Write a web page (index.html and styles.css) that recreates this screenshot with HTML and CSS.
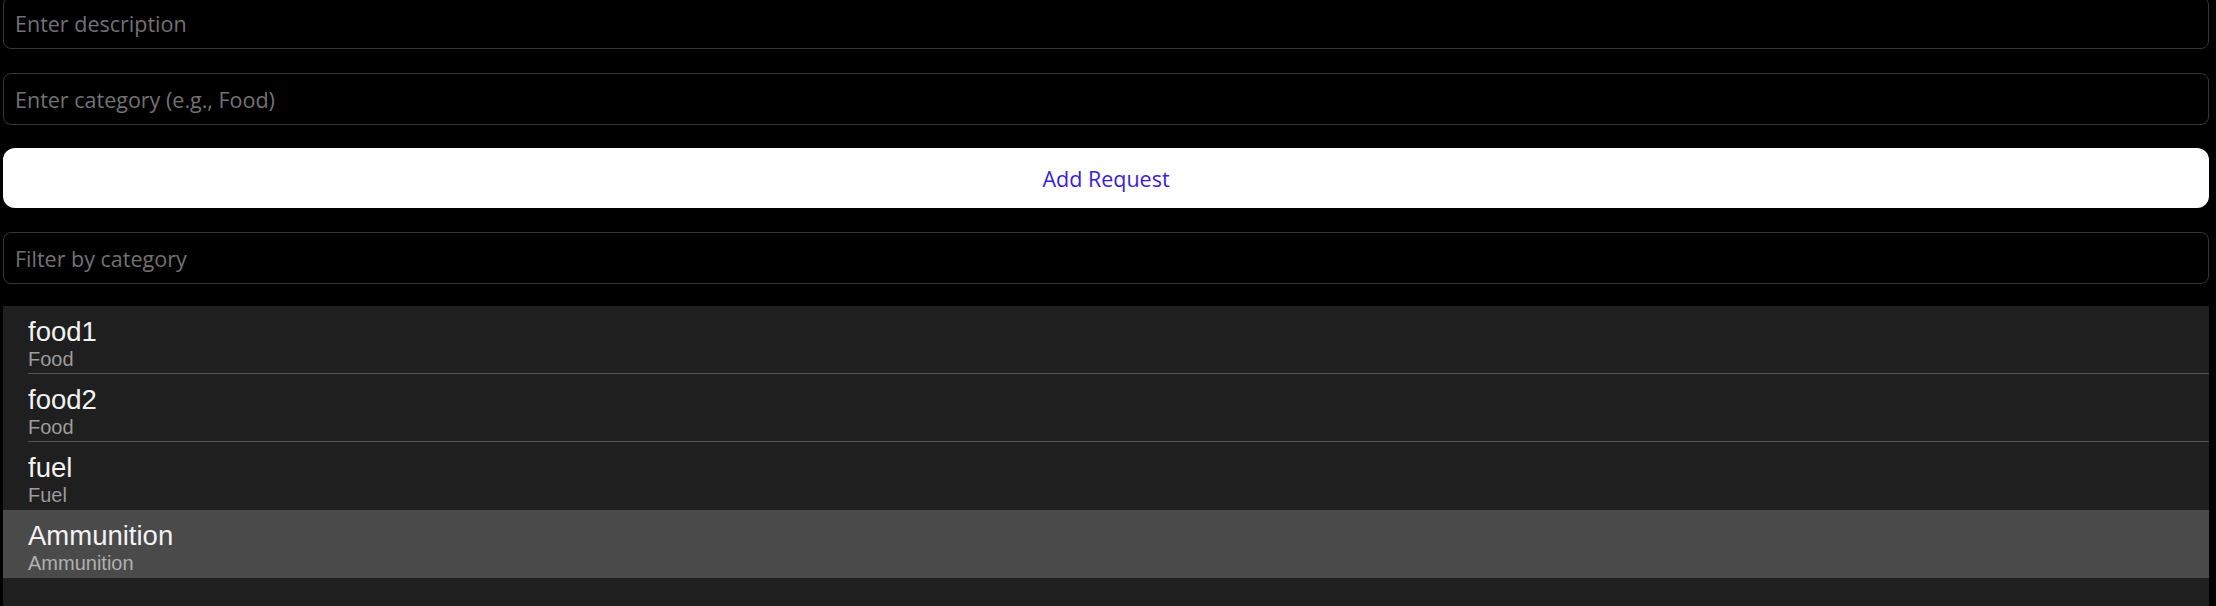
FILE: index.html
```html
<!DOCTYPE html>
<html lang="en">
<head>
<meta charset="utf-8">
<title>Requests</title>
<link rel="stylesheet" href="styles.css">
</head>
<body>
<main class="page">
  <input class="field" type="text" placeholder="Enter description">
  <input class="field field-gap" type="text" placeholder="Enter category (e.g., Food)">
  <button class="add-btn" type="button">Add Request</button>
  <input class="field field-last" type="text" placeholder="Filter by category">
  <ul class="list">
    <li class="row"><div class="row-inner"><div class="title">food1</div><div class="sub">Food</div></div></li>
    <li class="row"><div class="row-inner"><div class="title">food2</div><div class="sub">Food</div></div></li>
    <li class="row row-before-selected"><div class="row-inner"><div class="title">fuel</div><div class="sub">Fuel</div></div></li>
    <li class="row row-selected"><div class="row-inner"><div class="title">Ammunition</div><div class="sub">Ammunition</div></div></li>
  </ul>
</main>
</body>
</html>
```

FILE: styles.css
```css
html, body {
  margin: 0;
  padding: 0;
  background: #000;
  height: 100%;
  overflow: hidden;
}

.page {
  display: flex;
  flex-direction: column;
  margin-top: -3px;
  padding: 0 7px 0 3px;
  height: calc(100% + 3px);
  box-sizing: border-box;
}

.field {
  display: block;
  box-sizing: border-box;
  width: 100%;
  height: 52px;
  margin: 0 0 24px 0;
  padding: 0 11px;
  background: #000;
  border: 1px solid #363636;
  border-radius: 8px;
  color: #ddd;
  font-family: "Open Sans", sans-serif;
  font-size: 21.5px;
  outline: none;
}

.field::placeholder {
  color: #727272;
}

.field-gap {
  margin-bottom: 23px;
}

.field-last {
  margin-bottom: 22px;
}

.add-btn {
  display: block;
  box-sizing: border-box;
  width: 100%;
  height: 60px;
  margin: 0 0 24px 0;
  background: #fff;
  border: none;
  border-radius: 12px;
  color: #3b1ed6;
  font-family: "Open Sans", sans-serif;
  font-size: 21.5px;
  cursor: pointer;
}

.list {
  list-style: none;
  margin: 0;
  padding: 0;
  flex: 1;
  background: #1f1f1f;
}

.row {
  padding-left: 25px;
}

.row-inner {
  padding: 11px 0 2px 0;
  border-bottom: 1px solid #555;
  height: 54px;
}

.row-before-selected .row-inner {
  border-bottom-color: #1f1f1f;
}

.row-selected {
  background: #4a4a4a;
}

.row-selected .row-inner {
  border-bottom-color: #4a4a4a;
}

.title {
  font-family: "Liberation Sans", Arial, sans-serif;
  font-size: 27.5px;
  line-height: 30px;
  color: #f2f2f2;
}

.sub {
  font-family: "Liberation Sans", Arial, sans-serif;
  font-size: 20px;
  line-height: 24px;
  color: #9c9c9c;
}

.row-selected .sub {
  color: #b0b0b0;
}
```
